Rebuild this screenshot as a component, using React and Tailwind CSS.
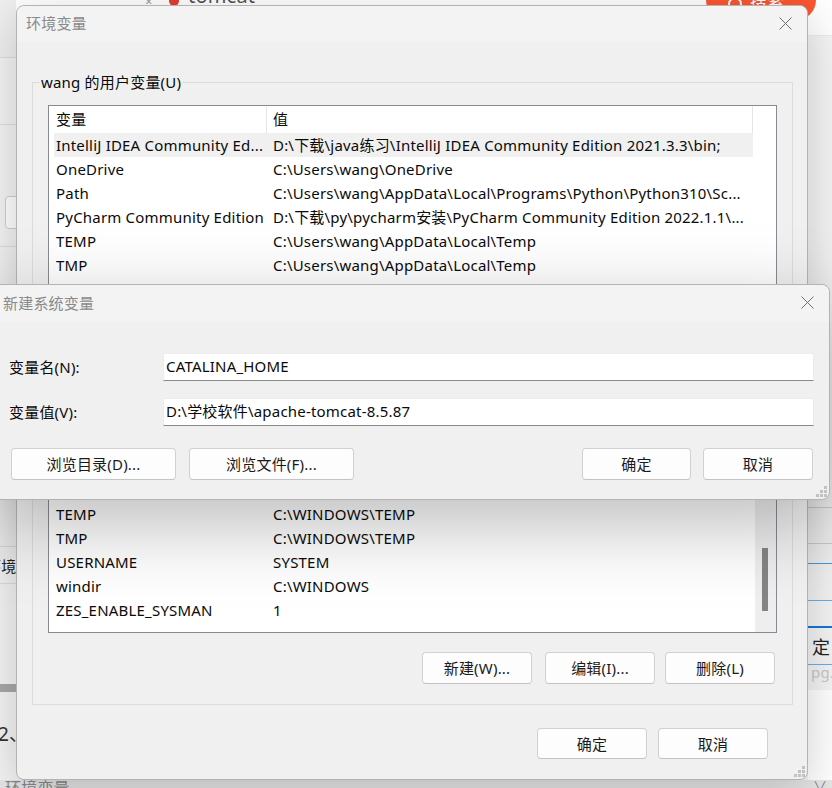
import React from "react";

function CloseX() {
  return (
    <svg width="13" height="13" viewBox="0 0 13 13" className="block">
      <path d="M0.5 0.5 L12.5 12.5 M12.5 0.5 L0.5 12.5" stroke="#6e6e6e" strokeWidth="1" fill="none" />
    </svg>
  );
}

function Grip() {
  const pts = [
    [8, 0],
    [4, 4],
    [8, 4],
    [0, 8],
    [4, 8],
    [8, 8],
  ];
  return (
    <svg width="11" height="11" viewBox="0 0 11 11" className="block">
      {pts.map(([x, y], i) => (
        <rect key={i} x={x} y={y} width="3" height="3" fill="#c2c2c2" />
      ))}
    </svg>
  );
}

function Btn({ children, className }) {
  return (
    <div
      className={`flex items-center justify-center bg-[#fdfdfd] border border-[#d1d1d1] border-b-[#c4c4c4] rounded-[4px] text-[15px] text-[#1a1a1a] ${className}`}
    >
      {children}
    </div>
  );
}

function Row({ name, value, selected }) {
  return (
    <div
      className={
        selected
          ? "flex h-[24px] items-center ml-[5px] w-[699px] bg-[#f0f0f0] whitespace-nowrap shrink-0"
          : "flex h-[24px] items-center ml-[5px] w-[699px] whitespace-nowrap shrink-0"
      }
    >
      <div className="w-[212px] pl-[2px] overflow-hidden">{name}</div>
      <div className="flex-1 pl-[7px] overflow-hidden">{value}</div>
    </div>
  );
}

function Header() {
  return (
    <div className="flex h-[27px] items-center w-[704px] shrink-0">
      <div className="w-[217px] pl-[7px] pb-[1px]">变量</div>
      <div className="w-px h-[26px] bg-[#e5e5e5]" />
      <div className="flex-1 pl-[6px] h-full flex items-center pb-[1px] border-r border-[#e5e5e5]">值</div>
    </div>
  );
}

const userRows = [
  ["IntelliJ IDEA Community Ed...", "D:\\下载\\java练习\\IntelliJ IDEA Community Edition 2021.3.3\\bin;", true],
  ["OneDrive", "C:\\Users\\wang\\OneDrive"],
  ["Path", "C:\\Users\\wang\\AppData\\Local\\Programs\\Python\\Python310\\Sc..."],
  ["PyCharm Community Edition", "D:\\下载\\py\\pycharm安装\\PyCharm Community Edition 2022.1.1\\..."],
  ["TEMP", "C:\\Users\\wang\\AppData\\Local\\Temp"],
  ["TMP", "C:\\Users\\wang\\AppData\\Local\\Temp"],
];

const sysRows = [
  ["TEMP", "C:\\WINDOWS\\TEMP"],
  ["TMP", "C:\\WINDOWS\\TEMP"],
  ["USERNAME", "SYSTEM"],
  ["windir", "C:\\WINDOWS"],
  ["ZES_ENABLE_SYSMAN", "1"],
];

export default function App() {
  return (
    <div className="relative w-[832px] h-[788px] overflow-hidden bg-[#f4f4f4] font-['Noto_Sans','Noto_Sans_CJK_SC',sans-serif] text-[15px] tracking-[0.2px] text-[#0a0a0a] leading-[20px]">
      {/* background page */}
      <div className="absolute left-0 top-0 w-[832px] h-[36px] bg-white border-b border-[#ececec]" />
      <div className="absolute left-0 top-0 w-[16px] h-[58px] bg-[#efefef] border-b border-[#dcdcdc]" />
      <div className="absolute left-0 top-[124px] w-[16px] h-px bg-[#dedede]" />
      <div className="absolute left-[5px] top-[196px] w-[20px] h-[33px] rounded-[4px] border border-[#cfcfcf] bg-white" />
      <div className="absolute left-0 top-[246px] w-[16px] h-px bg-[#dedede]" />
      <div className="absolute left-0 top-[546px] w-[16px] h-px bg-[#dedede]" />
      <div className="absolute left-[-14px] top-[556px] text-[15px] text-[#222]">环境</div>
      <div className="absolute left-0 top-[583px] w-[16px] h-px bg-[#dedede]" />
      <div className="absolute left-0 top-[684px] w-[16px] h-[8px] bg-[#a8a8a8]" />
      <div className="absolute left-[-2px] top-[724px] text-[19px] text-[#333]">2、</div>
      <div className="absolute left-0 top-[780px] w-[832px] h-[8px] bg-[#e6e6e6]" />
      <div className="absolute left-[5px] top-[778px] text-[16px] text-[#888]">环境变量</div>
      <div className="absolute left-[145px] top-[-9px] text-[13px] text-[#999]">×</div>
      <div className="absolute left-[169px] top-[-8px] w-[10px] h-[14px] rounded-full bg-[#e33e33]" />
      <div className="absolute left-[188px] top-[-14px] text-[20px] text-[#555]">tomcat</div>
      <div className="absolute left-[706px] top-[-20px] w-[110px] h-[40px] rounded-[20px] bg-[#fc5531] flex items-center pl-[22px] gap-[8px] text-white">
        <div className="w-[14px] h-[14px] rounded-full border-2 border-white mt-[8px]" />
        <span className="text-[17px] mt-[4px]">搜索</span>
      </div>
      <div className="absolute left-[808px] top-[507px] w-[24px] h-px bg-[#cfcfcf]" />
      <div className="absolute left-[808px] top-[543px] w-[24px] h-px bg-[#cfcfcf]" />
      <div className="absolute left-[808px] top-[563px] w-[24px] h-px bg-[#4a9be0]" />
      <div className="absolute left-[808px] top-[600px] w-[24px] h-px bg-[#6aaee6]" />
      <div className="absolute left-[808px] top-[626px] w-[24px] h-[2px] bg-[#1677d2]" />
      <div className="absolute left-[812px] top-[637px] text-[18px] text-[#222]">定</div>
      <div className="absolute left-[808px] top-[664px] w-[24px] h-px bg-[#6aaee6]" />
      <div className="absolute left-[811px] top-[662px] text-[15px] text-[#c8c8c8]">pg.</div>
      <div className="absolute left-[808px] top-[690px] w-[24px] h-[90px] bg-white" />
      <div className="absolute left-[813px] top-[776px] text-[14px] text-[#888]">∨</div>

      {/* main dialog: 环境变量 */}
      <div className="absolute z-10 left-[16px] top-[5px] w-[792px] h-[775px] rounded-[8px] border border-[#b3b3b3] bg-[#f0f0f0] [box-shadow:0_12px_48px_#00000033] flex flex-col">
        <div className="h-[36px] shrink-0 flex items-center justify-between pl-[9px] pr-[15px] pb-[2px] bg-[#f3f3f3] rounded-t-[8px]">
          <span className="text-[#8a8a8a]">环境变量</span>
          <CloseX />
        </div>
        <div className="flex flex-col pl-[15px] pr-[14px] pt-[40px]">
          {/* user vars */}
          <div className="relative border border-[#dcdcdc] pt-[22px] px-[15px] pb-[13px]">
            <span className="absolute left-[7px] top-[-11px] px-[1px] bg-[#f0f0f0]">wang 的用户变量(U)</span>
            <div className="h-[190px] border border-[#868a91] bg-white overflow-hidden flex flex-col">
              <Header />
              {userRows.map(([n, v, s], i) => (
                <Row key={i} name={n} value={v} selected={s} />
              ))}
            </div>
            <div className="mt-[10px] h-[32px]" />
          </div>
          {/* system vars */}
          <div className="relative mt-[28px] border border-[#dcdcdc] pt-[22px] px-[15px] pb-[20px]">
            <div className="h-[231px] border border-[#868a91] bg-white overflow-hidden flex">
              <div className="flex-1 flex flex-col overflow-hidden">
                <div className="h-[99px] shrink-0" />
                {sysRows.map(([n, v], i) => (
                  <Row key={i} name={n} value={v} />
                ))}
              </div>
              <div className="w-[21px] shrink-0 bg-[#eeeeee] flex flex-col">
                <div className="mt-[145px] ml-[7px] w-[6px] h-[63px] bg-[#858585]" />
              </div>
            </div>
            <div className="mt-[19px] h-[32px] flex justify-end pr-[2px]">
              <Btn className="w-[110px] h-[32px]">新建(W)...</Btn>
              <Btn className="w-[110px] h-[32px] ml-[13px]">编辑(I)...</Btn>
              <Btn className="w-[110px] h-[32px] ml-[10px]">删除(L)</Btn>
            </div>
          </div>
          <div className="mt-[23px] flex justify-end gap-[11px] pr-[25px]">
            <Btn className="w-[110px] h-[31px]">确定</Btn>
            <Btn className="w-[110px] h-[31px]">取消</Btn>
          </div>
        </div>
        <div className="absolute right-[2px] bottom-[2px]">
          <Grip />
        </div>
      </div>

      {/* 新建系统变量 dialog */}
      <div className="absolute z-20 left-[-7px] top-[284px] w-[837px] h-[216px] rounded-[8px] border border-[#b3b3b3] bg-[#f0f0f0] [box-shadow:0_24px_80px_#00000045] flex flex-col">
        <div className="h-[37px] shrink-0 flex items-center justify-between pl-[9px] pr-[15px] pb-[2px] bg-[#f3f3f3] rounded-t-[8px]">
          <span className="text-[#8a8a8a]">新建系统变量</span>
          <CloseX />
        </div>
        <div className="flex flex-col px-[15px]">
          <div className="mt-[31px] flex items-center">
            <div className="w-[154px] pb-[1px]">变量名(N):</div>
            <div className="flex-1 h-[28px] bg-white border border-[#ececec] border-b-[#8a8a8a] flex items-center pl-[2px] pb-[2px]">
              CATALINA_HOME
            </div>
          </div>
          <div className="mt-[17px] flex items-center">
            <div className="w-[154px] pb-[1px]">变量值(V):</div>
            <div className="flex-1 h-[28px] bg-white border border-[#ececec] border-b-[#8a8a8a] flex items-center pl-[2px] pb-[2px]">
              D:\学校软件\apache-tomcat-8.5.87
            </div>
          </div>
          <div className="mt-[22px] flex items-center pl-[2px] pr-[1px]">
            <Btn className="w-[165px] h-[32px]">浏览目录(D)...</Btn>
            <Btn className="w-[165px] h-[32px] ml-[13px]">浏览文件(F)...</Btn>
            <div className="flex-1" />
            <Btn className="w-[109px] h-[32px]">确定</Btn>
            <Btn className="w-[110px] h-[32px] ml-[12px]">取消</Btn>
          </div>
        </div>
        <div className="absolute right-[2px] bottom-[2px]">
          <Grip />
        </div>
      </div>
    </div>
  );
}
